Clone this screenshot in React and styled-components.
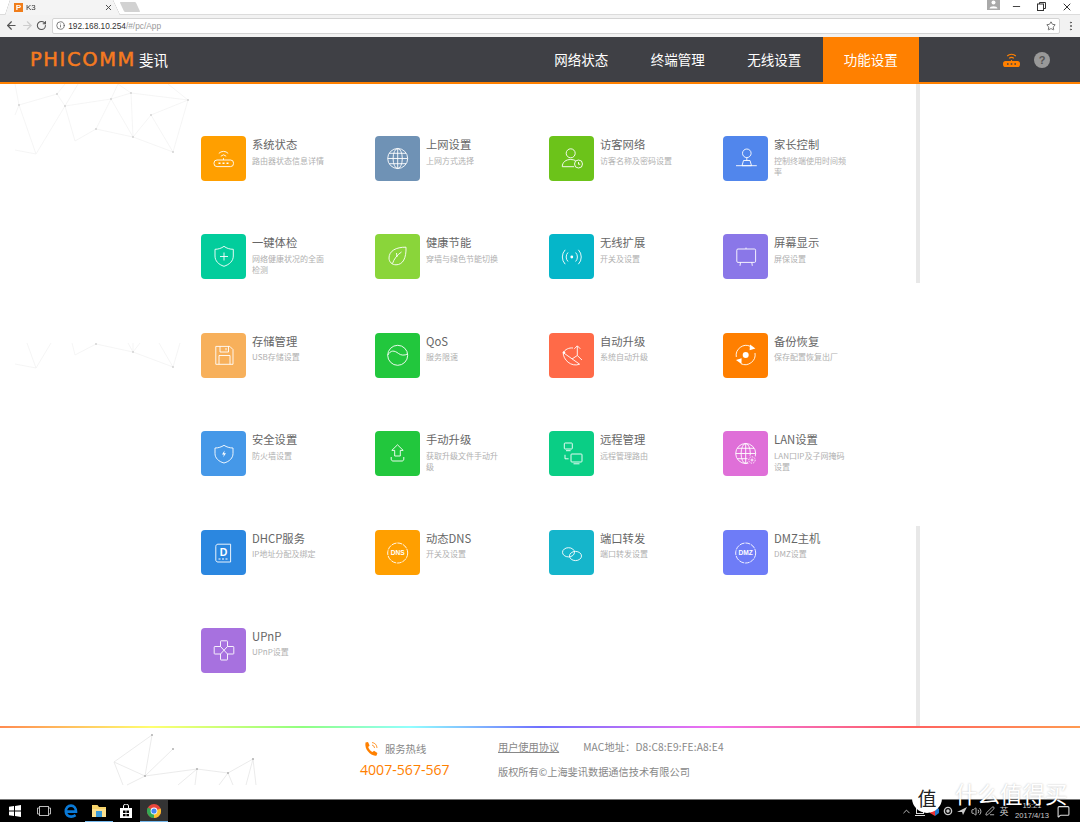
import React from 'react'
import styled, { createGlobalStyle } from 'styled-components'
import { ArrowLeft, ArrowRight, RotateCw, Info, Star, MoreVertical, Minus, X, ChevronUp, Volume2, PenLine, MessageSquare } from 'lucide-react'

const CJK = `"Noto Sans CJK SC", "Liberation Sans", sans-serif`

const Global = createGlobalStyle`
  html, body { margin: 0; padding: 0; height: 100%; background: #fff; }
  body { font-family: ${CJK}; overflow: hidden; }
  * { box-sizing: border-box; }
`

const Line = ({ d }) => <path d={d} />

const icons = {
  router: (
    <>
      <rect x="13" y="24" width="19.5" height="6.6" rx="3" />
      <path d="M17.8 17.4 A6.5 6.5 0 0 1 27.2 17.4 M19.8 20.2 A3.8 3.8 0 0 1 25.2 20.2 M22.5 22.2 V24" />
      <path className="solid" d="M17.5 26.4h2v1.6h-2z M21.5 26.4h2v1.6h-2z M25.5 26.4h2v1.6h-2z" />
    </>
  ),
  globe: (
    <>
      <circle cx="22.7" cy="22.5" r="10" />
      <ellipse cx="22.7" cy="22.5" rx="4.6" ry="10" />
      <path d="M22.7 12.5 V32.5 M12.7 22.5 H32.7 M14.2 17.3 H31.2 M14.2 27.7 H31.2" />
    </>
  ),
  guest: (
    <>
      <circle cx="21.7" cy="17.3" r="4.5" />
      <path d="M13.3 30.7 C13.3 26 17 23.5 21.7 23.5 C23.5 23.5 25 23.8 26.5 24.6 M13.3 30.7 H25" />
      <circle cx="29.5" cy="28" r="4" />
      <path d="M29.5 26 V28.2 H31.2" />
    </>
  ),
  joystick: (
    <>
      <circle cx="23.8" cy="17.3" r="4.3" />
      <path d="M23.8 21.6 V24.5 M20.5 24.5 H27 L28.5 29.7 H19 Z M13 29.7 H33.8" />
    </>
  ),
  shieldPlus: (
    <>
      <path d="M23 12.3 C25.5 14.3 29 15.3 32.3 15.3 V22 C32.3 27 28.5 30.5 23 32.3 C17.5 30.5 14 27 14 22 V15.3 C17 15.3 20.5 14.3 23 12.3 Z" />
      <path d="M23 18.5 V26.5 M19 22.5 H27" />
    </>
  ),
  leaf: (
    <>
      <path d="M31 13.2 C21 13 14 17 14 24 C14 28 17 30.8 21 30.8 C28 30.8 31.4 24 31 13.2 Z" />
      <path d="M17.5 29.5 C19 25 22 21 26.5 18 M22 23 L21.5 19" />
    </>
  ),
  signal: (
    <>
      <circle className="solid" cx="22.8" cy="23" r="1.4" />
      <path d="M19 18.5 A6.5 6.5 0 0 0 19 27.5 M26.6 18.5 A6.5 6.5 0 0 1 26.6 27.5 M16.2 15.8 A10.5 10.5 0 0 0 16.2 30.2 M29.4 15.8 A10.5 10.5 0 0 1 29.4 30.2" />
    </>
  ),
  screen: (
    <>
      <rect x="13.8" y="15" width="18.8" height="13.4" rx="1.2" />
      <path d="M23 15 V13.6 M17.5 28.4 L17 31.8 M28.8 28.4 L29.3 31.8" />
    </>
  ),
  floppy: (
    <>
      <path d="M14.8 13.4 H28.8 L32 16.6 V31.3 H14.8 Z" />
      <path d="M19 13.4 V19 H27.5 V13.4 M18 31.3 V22.5 H29 V31.3 M25 15 V17.3" />
    </>
  ),
  wave: (
    <>
      <circle cx="22.7" cy="22.3" r="10" />
      <path d="M12.8 22.2 C15.5 16.8 19.5 17.3 23.5 20.5 C26 22.5 29.5 22.6 32.6 21" />
    </>
  ),
  dish: (
    <>
      <path d="M14.2 19.6 C14 26.5 22 34.5 30.6 31.2 Z" />
      <path d="M14.2 19.6 C16 16.5 20 14.5 24 15 M28.3 22.5 V13 M25.3 15.8 L28.3 12.8 L31.3 15.8 M23 26 L28.3 22.5 L33 27" />
      <circle className="solid" cx="15" cy="19.5" r="1.2" />
    </>
  ),
  backup: (
    <>
      <circle className="solid" cx="22.7" cy="22" r="3" />
      <path d="M13.3 24 A10 10 0 0 1 27.5 13.4 M32 20 A10 10 0 0 1 17.9 30.7" />
      <path className="solid" d="M27 11.5 L32.4 15.6 L26.6 17.2 Z M13 27 L18.6 25.2 L18.5 31 Z" />
    </>
  ),
  shieldBolt: (
    <>
      <path d="M23 14.3 C25.5 16 28.8 17 32 17 V22.5 C32 27 28.5 30.5 23 32 C17.5 30.5 14 27 14 22.5 V17 C17.2 17 20.5 16 23 14.3 Z" />
      <path className="solid" d="M23.6 19.5 L21 23.6 H22.9 L22.2 26.3 L25 22.2 H23.1 Z" />
    </>
  ),
  upload: (
    <>
      <path d="M22.5 13.8 L28.2 19.4 H25.3 V25 H19.7 V19.4 H16.8 Z" />
      <path d="M16.2 26 V28 C16.2 29.3 17 30 18 30 H27 C28 30 28.8 29.3 28.8 28 V26" />
    </>
  ),
  remote: (
    <>
      <rect x="15.3" y="12" width="8" height="6" rx="0.8" />
      <path d="M17 19.7 H21.6 M16 23.8 V27.8 H19.6" />
      <rect x="22" y="23" width="11" height="8" rx="0.8" />
      <path d="M24.5 32.8 H30.5" />
    </>
  ),
  lanGlobe: (
    <>
      <circle cx="22.7" cy="22.5" r="10" />
      <ellipse cx="22.7" cy="22.5" rx="4.6" ry="10" />
      <path d="M22.7 12.5 V32.5 M12.7 22.5 H32.7 M14.2 17.3 H31.2 M14.2 27.7 H31.2" />
      <circle className="fill" cx="29" cy="29" r="4.8" />
      <circle cx="29" cy="29" r="3.2" strokeDasharray="1.4 1" />
      <circle cx="29" cy="29" r="1" />
    </>
  ),
  dhcp: (
    <>
      <path d="M17 14.2 H29.6 V32 H17 C15.6 32 14.8 31.2 14.8 30 V16.4 C14.8 15.2 15.6 14.2 17 14.2 Z" />
      <text x="22.6" y="26" textAnchor="middle" fontSize="10.5" fontWeight="700" fontFamily="Liberation Sans">D</text>
      <path className="solid" d="M17.5 28.6h2v1h-2z M21 28.6h2v1h-2z M24.5 28.6h2v1h-2z" />
    </>
  ),
  dns: (
    <>
      <circle cx="22.7" cy="23" r="10" strokeDasharray="5 0.8" />
      <text x="22.7" y="25.4" textAnchor="middle" fontSize="6.6" fontWeight="700" fontFamily="Liberation Sans">DNS</text>
    </>
  ),
  port: (
    <>
      <ellipse cx="19.5" cy="22.3" rx="6" ry="4.6" />
      <ellipse cx="26.5" cy="26" rx="6" ry="4.6" />
    </>
  ),
  dmz: (
    <>
      <circle cx="22.7" cy="23" r="10" strokeDasharray="5 0.8" />
      <text x="22.7" y="25.4" textAnchor="middle" fontSize="6.6" fontWeight="700" fontFamily="Liberation Sans">DMZ</text>
    </>
  ),
  upnp: (
    <>
      <path d="M19.5 18.5 V13.4 Q19.5 12.8 20.1 12.8 H25.9 Q26.5 12.8 26.5 13.4 V18.5" />
      <path d="M19.5 26 V31.4 Q19.5 32 20.1 32 H25.9 Q26.5 32 26.5 31.4 V26" />
      <path d="M19.5 18.5 H13.8 Q13.2 18.5 13.2 19.1 V25.4 Q13.2 26 13.8 26 H19.5" />
      <path d="M26.5 18.5 H32.2 Q32.8 18.5 32.8 19.1 V25.4 Q32.8 26 32.2 26 H26.5" />
      <path d="M19.5 18.5 L26.5 26 M26.5 18.5 L19.5 26" />
    </>
  ),
}

const items = [
  { name: '系统状态', desc: '路由器状态信息详情', color: '#ff9f00', icon: 'router' },
  { name: '上网设置', desc: '上网方式选择', color: '#6f92b5', icon: 'globe' },
  { name: '访客网络', desc: '访客名称及密码设置', color: '#6cc31a', icon: 'guest' },
  { name: '家长控制', desc: '控制终端使用时间频率', color: '#5186ec', icon: 'joystick' },
  { name: '一键体检', desc: '网络健康状况的全面检测', color: '#02cd9c', icon: 'shieldPlus' },
  { name: '健康节能', desc: '穿墙与绿色节能切换', color: '#8ad53a', icon: 'leaf' },
  { name: '无线扩展', desc: '开关及设置', color: '#05b6c9', icon: 'signal' },
  { name: '屏幕显示', desc: '屏保设置', color: '#8a77e8', icon: 'screen' },
  { name: '存储管理', desc: 'USB存储设置', color: '#f7b05b', icon: 'floppy' },
  { name: 'QoS', desc: '服务限速', color: '#22c73d', icon: 'wave' },
  { name: '自动升级', desc: '系统自动升级', color: '#ff6a48', icon: 'dish' },
  { name: '备份恢复', desc: '保存配置恢复出厂', color: '#ff7f00', icon: 'backup' },
  { name: '安全设置', desc: '防火墙设置', color: '#4598e8', icon: 'shieldBolt' },
  { name: '手动升级', desc: '获取升级文件手动升级', color: '#22c73d', icon: 'upload' },
  { name: '远程管理', desc: '远程管理路由', color: '#0ace85', icon: 'remote' },
  { name: 'LAN设置', desc: 'LAN口IP及子网掩码设置', color: '#df6fd8', icon: 'lanGlobe' },
  { name: 'DHCP服务', desc: 'IP地址分配及绑定', color: '#2b87e0', icon: 'dhcp' },
  { name: '动态DNS', desc: '开关及设置', color: '#ff9f00', icon: 'dns' },
  { name: '端口转发', desc: '端口转发设置', color: '#15b5cb', icon: 'port' },
  { name: 'DMZ主机', desc: 'DMZ设置', color: '#6e7cf7', icon: 'dmz' },
  { name: 'UPnP', desc: 'UPnP设置', color: '#a771df', icon: 'upnp' },
]

const navs = ['网络状态', '终端管理', '无线设置', '功能设置']

const topWeb = [
  'M15 84 L19 105 L57 94 L65 84', 'M19 105 L15 115', 'M19 105 L36 154 L65 106 L57 94', 'M15 150 L36 154',
  'M65 106 L111 99 L131 93 L188 100 L151 115 L133 137 L111 99', 'M65 106 L75 141 L96 129 L133 137 L173 152 L151 115',
  'M96 129 L111 99 L118 84', 'M131 93 L133 137', 'M131 93 L118 84', 'M188 100 L173 152', 'M78 84 L65 106', 'M168 84 L188 100',
]
const topDots = [[19, 105], [57, 94], [65, 106], [111, 99], [131, 93], [188, 100], [151, 115], [96, 129], [133, 137], [173, 152]]
const midWeb = [
  'M15 364 L36 368 L27 343', 'M36 368 L51 343', 'M72 343 L75 355 L96 344 L133 352 L173 367',
  'M133 352 L128 343', 'M133 352 L133 343', 'M133 352 L140 343', 'M173 367 L159 343', 'M173 367 L180 343',
]
const midDots = [[96, 344], [133, 352], [173, 367]]
const footWeb = [
  'M152 735 L114 762 L145 776 L152 735', 'M173 749 L145 776 L197 769 L228 773 L253 759',
  'M114 762 L123 785', 'M145 776 L127 785', 'M197 769 L195 785', 'M197 769 L178 785',
  'M228 773 L219 785', 'M228 773 L233 785', 'M253 759 L246 785', 'M253 759 L256 785',
]
const footDots = [[152, 735], [173, 749], [145, 776], [197, 769], [228, 773], [253, 759]]

const Web = ({ lines, dots, top, height, width }) => (
  <WebArt viewBox={`0 ${top} ${width} ${height}`} width={width} height={height} $top={top}>
    <g fill="none" stroke="#f0f0f0" strokeWidth="0.7">
      {lines.map(d => <Line key={d} d={d} />)}
    </g>
    {dots.map(([x, y]) => <circle key={x} cx={x} cy={y} r="0.9" fill="#d0d0d0" />)}
  </WebArt>
)

export default function App() {
  return (
    <Page>
      <Global />
      <TabBar>
        <TabEdge>
          <Tab>
            <Favicon>P</Favicon>
            <TabTitle>K3</TabTitle>
            <X size={9} strokeWidth={2.5} color="#444" />
          </Tab>
        </TabEdge>
        <NewTab />
        <WindowButtons>
          <Avatar>
            <svg width="9" height="9" viewBox="0 0 9 9"><circle cx="4.5" cy="2.6" r="2" fill="#fff" /><path d="M0.5 8.5 C1 5.5 8 5.5 8.5 8.5 Z" fill="#fff" /></svg>
          </Avatar>
          <Minus size={11} color="#333" />
          <svg width="9" height="9" viewBox="0 0 9 9" fill="none" stroke="#333"><rect x="0.5" y="2" width="6" height="6.5" /><path d="M2.5 2 V0.5 H8.5 V6.5 H6.5" /></svg>
          <X size={12} color="#333" />
        </WindowButtons>
      </TabBar>
      <Toolbar>
        <ArrowLeft size={13} strokeWidth={2.2} color="#555" />
        <ArrowRight size={13} strokeWidth={2.2} color="#ccc" />
        <RotateCw size={11} strokeWidth={2.4} color="#555" />
        <Omnibox>
          <Info size={9} color="#555" />
          <Url>192.168.10.254<UrlPath>/#/pc/App</UrlPath></Url>
          <Star size={10} color="#555" />
        </Omnibox>
        <MoreVertical size={12} color="#555" />
      </Toolbar>
      <Header>
        <Logo>
          <LogoLatin>PHICOMM</LogoLatin>
          <LogoCn>斐讯</LogoCn>
        </Logo>
        <Nav>
          {navs.map((n, i) => <NavItem key={n} $active={i === 3}>{n}</NavItem>)}
        </Nav>
        <HeaderTools>
          <svg width="17" height="15" viewBox="0 0 17 15" fill="none" stroke="#ff8000" strokeWidth="1.1">
            <path d="M4.2 4 A6 6 0 0 1 12.8 4 M6.2 6.4 A3 3 0 0 1 10.8 6.4 M8.5 8 V10" />
            <rect x="0.6" y="9.6" width="15.8" height="4.8" rx="2" fill="#ff8000" />
            <path d="M4 12 h1.6 M7.7 12 h1.6 M11.4 12 h1.6" stroke="#3f4045" strokeWidth="1.4" />
          </svg>
          <Help>?</Help>
        </HeaderTools>
      </Header>
      <Main>
        <Web lines={topWeb} dots={topDots} top={84} height={75} width={195} />
        <Web lines={midWeb} dots={midDots} top={343} height={30} width={195} />
        <Content>
          {items.map(it => (
            <Item key={it.name}>
              <Tile $color={it.color}>
                <Glyph viewBox="0 0 45 45" width="45" height="45" $color={it.color}>{icons[it.icon]}</Glyph>
              </Tile>
              <ItemText>
                <ItemName>{it.name}</ItemName>
                <ItemDesc>{it.desc}</ItemDesc>
              </ItemText>
            </Item>
          ))}
        </Content>
        <Track />
      </Main>
      <Rainbow />
      <Footer>
        <FootArt viewBox="100 728 170 58" width="170" height="58">
          <g fill="none" stroke="#e6e6e6" strokeWidth="0.8">
            {footWeb.map(d => <Line key={d} d={d} />)}
          </g>
          {footDots.map(([x, y]) => <circle key={x} cx={x} cy={y} r="1" fill="#b0b0b0" />)}
        </FootArt>
        <Hotline>
          <HotlineLabel>
            <svg width="16" height="16" viewBox="0 0 16 16" fill="none">
              <path d="M2.5 1.5 L5 1 L6.6 4.6 L5.2 6 C5.8 8 7.6 10.2 9.6 11 L11 9.8 L14.4 12 L13.6 14.4 C9 16 1 9 2.5 1.5 Z" fill="#ff8000" />
              <path d="M9 1.5 A6 6 0 0 1 14 7 M9 4 A3.4 3.4 0 0 1 11.6 7" stroke="#ff8000" strokeWidth="0.8" />
            </svg>
            服务热线
          </HotlineLabel>
          <HotlineNumber>4007-567-567</HotlineNumber>
        </Hotline>
        <FootInfo>
          <FootRow>
            <Agreement>用户使用协议</Agreement>
            <MacAddress>MAC地址：D8:C8:E9:FE:A8:E4</MacAddress>
          </FootRow>
          <FootRow>版权所有©上海斐讯数据通信技术有限公司</FootRow>
        </FootInfo>
      </Footer>
      <Taskbar>
        <TaskButton $wide>
          <svg width="12" height="12" viewBox="0 0 12 12" fill="#fff"><path d="M0 1.8 L5 1 V5.6 H0 Z M6 .9 L12 0 V5.6 H6 Z M0 6.4 H5 V11 L0 10.2 Z M6 6.4 H12 V12 L6 11.1 Z" /></svg>
        </TaskButton>
        <TaskButton>
          <svg width="14" height="10" viewBox="0 0 14 10" fill="none" stroke="#bbb"><rect x="2.5" y="0.5" width="9" height="9" /><path d="M2.5 2 H.5 V8 H2.5 M11.5 2 H13.5 V8 H11.5" /></svg>
        </TaskButton>
        <TaskButton>
          <svg width="14" height="14" viewBox="0 0 14 14" fill="none" stroke="#0a7ad8" strokeWidth="2.6"><path d="M2 7.6 H12 C12 4 10 1.6 7 1.6 C4 1.6 1.8 4 1.8 7.4 C1.8 10.6 4 12.6 7.2 12.6 C9 12.6 10.4 12 11.6 11.2" /></svg>
        </TaskButton>
        <TaskButton $open>
          <svg width="14" height="13" viewBox="0 0 14 13"><path d="M0 1 H5.5 L7 3 H14 V13 H0 Z" fill="#f6d36a" /><rect x="0" y="5" width="14" height="8" fill="#fbe08f" /><rect x="4" y="7" width="6" height="6" fill="#3a9ad9" /></svg>
        </TaskButton>
        <TaskButton>
          <svg width="12" height="14" viewBox="0 0 12 14"><path d="M0 4 H12 V14 H0 Z" fill="#fff" /><path d="M3.5 4 V2 A2.5 2 0 0 1 8.5 2 V4" fill="none" stroke="#fff" /><path d="M3 6.5h2.6v2.6H3z M6.4 6.5H9v2.6H6.4z M3 10h2.6v2.2H3z M6.4 10H9v2.2H6.4z" fill="#000" /></svg>
        </TaskButton>
        <TaskButton $open $active>
          <svg width="14" height="14" viewBox="0 0 14 14">
            <circle cx="7" cy="7" r="7" fill="#e8453c" />
            <path d="M7 7 L13.6 4.6 A7 7 0 0 1 7 14 Z" fill="#fbc02d" />
            <path d="M7 7 L7 14 A7 7 0 0 1 1 3.4 Z" fill="#34a853" />
            <circle cx="7" cy="7" r="3.4" fill="#fff" />
            <circle cx="7" cy="7" r="2.6" fill="#4285f4" />
          </svg>
        </TaskButton>
        <Tray>
          <TraySlot><ChevronUp size={11} color="#ccc" /></TraySlot>
          <TraySlot><svg width="10" height="10" viewBox="0 0 10 10" fill="none" stroke="#ddd"><rect x="1.5" y="1.5" width="7" height="6" /><path d="M0 9.5 H10" /></svg></TraySlot>
          <TraySlot><svg width="9" height="10" viewBox="0 0 9 10"><path d="M0 3 L5 0 V10 L0 7 Z" fill="#e33" /><path d="M5 0 L9 3 V7 L5 10 Z" fill="#27c" /></svg></TraySlot>
          <TraySlot><svg width="10" height="10" viewBox="0 0 10 10" fill="none" stroke="#ccc" strokeWidth="1.4"><circle cx="5" cy="5" r="3.6" /><circle cx="5" cy="5" r="1" fill="#ccc" /></svg></TraySlot>
          <TraySlot><svg width="10" height="8" viewBox="0 0 10 8"><path d="M0 5 L10 0 L6 8 L5 5 Z" fill="#ccc" /></svg></TraySlot>
          <TraySlot><Volume2 size={11} color="#ccc" /></TraySlot>
          <TraySlot><PenLine size={10} color="#ccc" /></TraySlot>
          <TraySlot><Ime>英</Ime></TraySlot>
          <Clock>
            <span>15:21</span>
            <span>2017/4/13</span>
          </Clock>
          <NotifySlot><MessageSquare size={13} color="#ddd" /></NotifySlot>
        </Tray>
        <Watermark>
          <Seal>值</Seal>
          <WatermarkText>什么值得买</WatermarkText>
        </Watermark>
      </Taskbar>
    </Page>
  )
}

const Page = styled.div`
  width: 1080px;
  height: 822px;
  display: flex;
  flex-direction: column;
  overflow: hidden;
  position: relative;
`

const TabBar = styled.div`
  height: 15px;
  display: flex;
  align-items: flex-end;
  padding-left: 5px;
  background: #fff;
  border-bottom: 1px solid #dcdcdc;
`

const TabEdge = styled.div`
  filter: drop-shadow(0 0 0.6px #888);
  margin-bottom: -1px;
`

const Tab = styled.div`
  width: 115px;
  height: 15px;
  padding: 0 7px 0 9px;
  display: flex;
  align-items: center;
  background: #f4f4f4;
  clip-path: polygon(5px 0, 108px 0, 115px 100%, 0 100%);
`

const Favicon = styled.span`
  width: 9px;
  height: 9px;
  background: #f07d1a;
  color: #fff;
  font: bold 8px/9px "Liberation Sans", sans-serif;
  text-align: center;
`

const TabTitle = styled.span`
  flex: 1;
  margin-left: 3px;
  font: 8px "Liberation Sans", sans-serif;
  color: #333;
`

const NewTab = styled.div`
  width: 16px;
  height: 10px;
  margin: 0 0 2px 2px;
  background: #d2d2d2;
  transform: skewX(25deg);
  border-radius: 1px;
`

const WindowButtons = styled.div`
  margin-left: auto;
  height: 15px;
  display: flex;
  align-items: center;
  gap: 15px;
  padding-right: 7px;
`

const Avatar = styled.div`
  width: 13px;
  height: 10px;
  margin: 0 -3.5px 4px 0;
  background: #a9a9a9;
  display: flex;
  align-items: center;
  justify-content: center;
`

const Toolbar = styled.div`
  height: 22px;
  display: flex;
  align-items: center;
  gap: 3px;
  padding: 0 3px 1px 5px;
  background: #f2f2f2;
`

const Omnibox = styled.div`
  flex: 0 0 1008px;
  height: 16px;
  margin: 0 2px;
  padding: 0 3px;
  display: flex;
  align-items: center;
  background: #fff;
  border: 1px solid #d4d4d4;
  border-radius: 2px;
`

const Url = styled.div`
  flex: 1;
  margin-left: 3px;
  font: 8.3px "Liberation Sans", sans-serif;
  color: #333;
`

const UrlPath = styled.span`
  color: #999;
`

const Header = styled.div`
  height: 47px;
  display: flex;
  background: #3f4045;
  border-bottom: 2px solid #ff8000;
`

const Logo = styled.div`
  flex: 0 0 533px;
  padding-left: 30px;
  display: flex;
  align-items: center;
`

const LogoLatin = styled.span`
  font: 19.5px "DejaVu Sans", sans-serif;
  letter-spacing: 1.6px;
  color: #f47a20;
  -webkit-text-stroke: 0.5px #f47a20;
`

const LogoCn = styled.span`
  margin-left: 3px;
  font-size: 14.5px;
  color: #fff;
`

const Nav = styled.nav`
  display: flex;
`

const NavItem = styled.div`
  width: 96.5px;
  padding-bottom: 2px;
  display: flex;
  align-items: center;
  justify-content: center;
  font-size: 13.5px;
  color: #fff;
  background: ${p => (p.$active ? '#ff8000' : 'transparent')};
`

const HeaderTools = styled.div`
  flex: 1;
  display: flex;
  align-items: center;
  justify-content: flex-end;
  gap: 14px;
  padding-right: 30px;
`

const Help = styled.div`
  width: 16px;
  height: 16px;
  border-radius: 50%;
  background: #999;
  color: #555;
  font: bold 11px/16px "Liberation Sans", sans-serif;
  text-align: center;
`

const Main = styled.main`
  position: relative;
  height: 642px;
  display: flex;
  background: #fff;
`

const WebArt = styled.svg`
  position: absolute;
  left: 0;
  top: ${p => p.$top - 84}px;
`

const Content = styled.div`
  position: relative;
  flex: 0 0 916px;
  padding: 52px 0 0 201px;
  display: grid;
  grid-template-columns: repeat(4, 174px);
  grid-auto-rows: 98.4px;
`

const Track = styled.div`
  width: 4px;
  background: linear-gradient(#e8e8e8 0, #e8e8e8 199px, #fff 199px, #fff 442px, #e8e8e8 442px);
`

const Item = styled.div`
  display: flex;
  gap: 6px;
`

const Tile = styled.div`
  flex: 0 0 45px;
  height: 45px;
  border-radius: 4px;
  background: ${p => p.$color};
`

const Glyph = styled.svg`
  display: block;
  fill: none;
  stroke: #fff;
  stroke-width: 0.9;
  .solid { fill: #fff; stroke: none; }
  .fill { fill: ${p => p.$color}; stroke: none; }
  text { fill: #fff; stroke: none; }
`

const ItemText = styled.div`
  width: 74px;
`

const ItemName = styled.div`
  font-size: 11.3px;
  line-height: 16px;
  color: #666;
`

const ItemDesc = styled.div`
  margin-top: 2.5px;
  font-size: 8px;
  line-height: 11px;
  color: #b0b0b0;
`

const Rainbow = styled.div`
  height: 2px;
  background: linear-gradient(90deg, #ff8a50 0, #ffff70 14%, #90ff80 28%, #90ffff 38%, #7070ff 50%, #f070f0 66%, #ff6060 84%, #ff9a50 100%);
`

const Footer = styled.footer`
  position: relative;
  height: 71px;
  padding: 13px 0 0 360px;
  display: flex;
  background: #fff;
`

const FootArt = styled.svg`
  position: absolute;
  left: 100px;
  top: 0;
`

const Hotline = styled.div`
  width: 138px;
`

const HotlineLabel = styled.div`
  display: flex;
  align-items: center;
  gap: 6px;
  padding-left: 3px;
  font-size: 10.3px;
  line-height: 16px;
  color: #888;
`

const HotlineNumber = styled.div`
  margin-top: 3px;
  font: 14.1px/20px "Open Sans", sans-serif;
  color: #ff8000;
`

const FootInfo = styled.div`
  font-size: 10.2px;
  color: #888;
`

const FootRow = styled.div`
  height: 25px;
  line-height: 12px;
  display: flex;
  gap: 24px;
`

const Agreement = styled.span`
  text-decoration: underline;
`

const MacAddress = styled.span`
  letter-spacing: 0.15px;
`

const Taskbar = styled.div`
  position: relative;
  height: 23px;
  display: flex;
  background: #000;
  border-top: 1px solid #777;
`

const TaskButton = styled.div`
  width: ${p => (p.$wide ? 30 : 27.5)}px;
  display: flex;
  align-items: center;
  justify-content: center;
  background: ${p => (p.$active ? '#333' : 'transparent')};
  border-bottom: 1px solid ${p => (p.$open ? '#76b9ed' : 'transparent')};
`

const Tray = styled.div`
  margin-left: auto;
  display: flex;
  align-items: center;
  padding-right: 7px;
`

const TraySlot = styled.div`
  width: 14px;
  display: flex;
  align-items: center;
  justify-content: center;
`

const NotifySlot = styled.div`
  width: 20px;
  display: flex;
  align-items: center;
  justify-content: center;
`

const Ime = styled.span`
  font-size: 9px;
  color: #ccc;
`

const Clock = styled.div`
  width: 42px;
  display: flex;
  flex-direction: column;
  align-items: center;
  font: 7.6px/10.5px "Liberation Sans", sans-serif;
  color: #ccc;
`

const Watermark = styled.div`
  position: absolute;
  left: 912px;
  top: -17px;
  display: flex;
  align-items: center;
  gap: 13px;
`

const Seal = styled.div`
  width: 30px;
  height: 30px;
  border-radius: 50%;
  background: #fff;
  color: #222;
  font-size: 19px;
  line-height: 30px;
  text-align: center;
`

const WatermarkText = styled.div`
  margin-top: -10px;
  font-size: 22.5px;
  line-height: 18px;
  color: #fff;
  text-shadow: 0 0 2px rgba(0, 0, 0, 0.28);
`
